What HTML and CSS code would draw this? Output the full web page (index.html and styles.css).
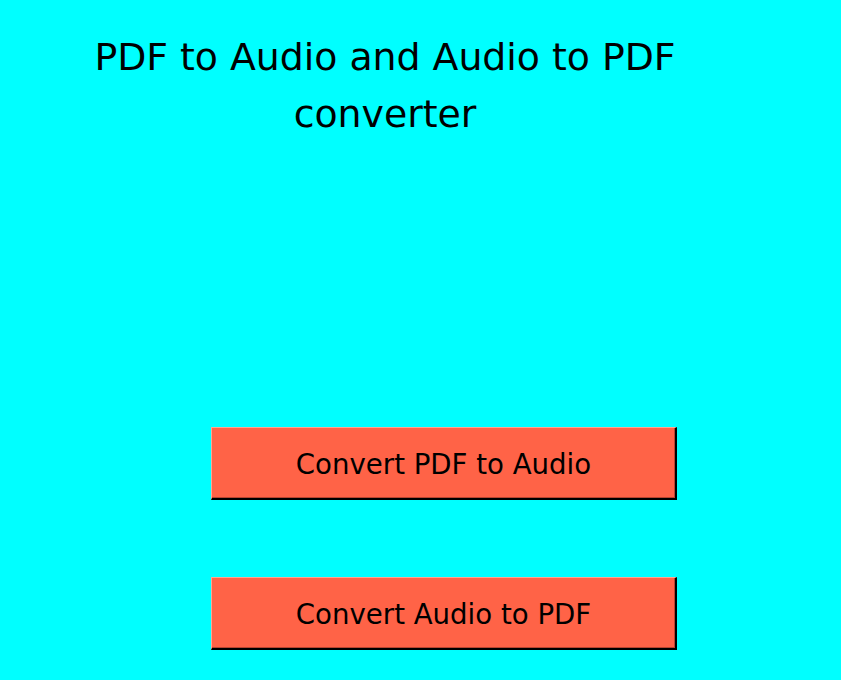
FILE: index.html
```html
<!DOCTYPE html>
<html>
<head>
<meta charset="utf-8">
<link rel="stylesheet" href="styles.css">
</head>
<body>
<main class="app">
  <h1 class="title">PDF to Audio and Audio to PDF<br>converter</h1>
  <div class="actions">
    <button class="btn">Convert PDF to Audio</button>
    <button class="btn">Convert Audio to PDF</button>
  </div>
</main>
</body>
</html>
```
FILE: styles.css
```css
html, body {
  margin: 0;
  padding: 0;
  background: #00ffff;
  height: 100%;
  overflow: hidden;
}
.app {
  display: flex;
  flex-direction: column;
  font-family: "DejaVu Sans", "Liberation Sans", sans-serif;
  color: #000;
}
.title {
  margin: 0;
  padding-top: 29px;
  width: 770px;
  text-align: center;
  font-weight: normal;
  font-size: 37.8px;
  line-height: 57px;
}
.actions {
  display: flex;
  flex-direction: column;
  gap: 77px;
  padding-left: 211px;
  margin-top: 284px;
}
.btn {
  width: 466px;
  height: 73px;
  background: #ff6347;
  color: #000;
  font-family: inherit;
  font-size: 27.6px;
  border-style: solid;
  border-width: 1px 2px 2px 1px;
  border-color: #ffa591 #000 #000 #ffa591;
  box-shadow: inset -1px -1px 0 #b8442f;
  padding: 2px 0 0;
  cursor: pointer;
}
```
